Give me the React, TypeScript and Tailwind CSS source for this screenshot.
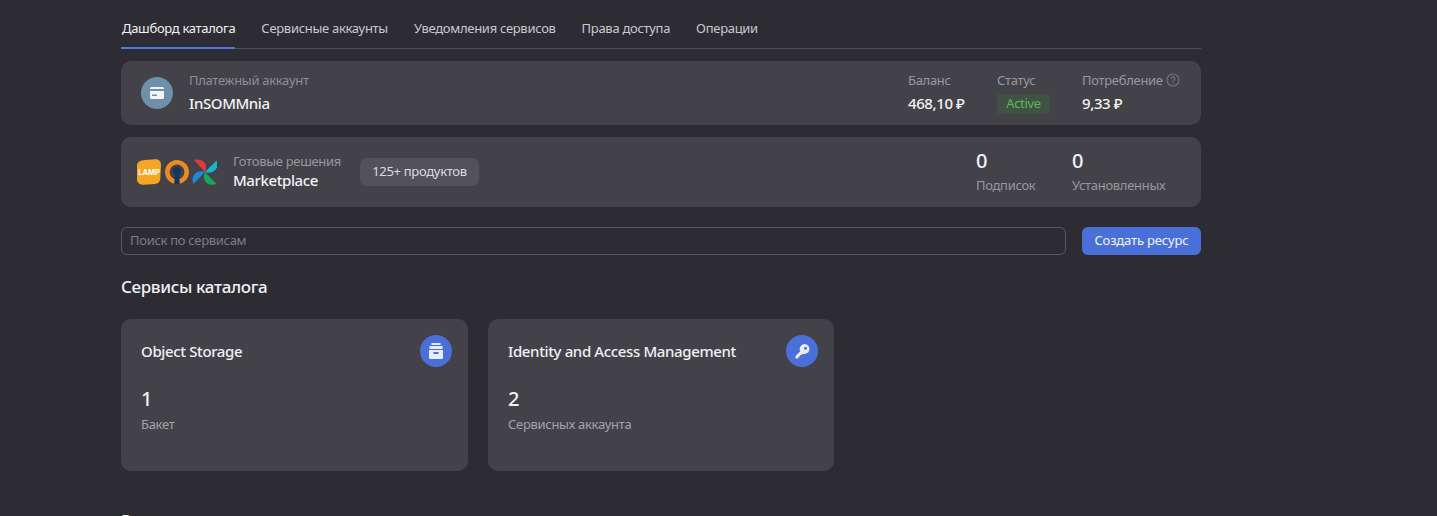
import React from 'react';

const TABS = ['Дашборд каталога', 'Сервисные аккаунты', 'Уведомления сервисов', 'Права доступа', 'Операции'];

const Stat = ({ value, label }: { value: string; label: string }) => (
  <div className="flex flex-col -mt-[2px]">
    <span className="text-[20px] leading-[24px] font-medium text-[#f2f2f4]">{value}</span>
    <span className="text-[13px] leading-[16px] mt-[4px] text-[#98989e]">{label}</span>
  </div>
);

const ServiceCard = ({ title, count, label, icon, width }: { title: string; count: string; label: string; icon: React.ReactNode; width: string }) => (
  <div className={`h-[152px] rounded-[10px] bg-[#434248] pl-[20px] pr-[16px] pt-[16px] ${width}`}>
    <div className="flex items-center justify-between h-[32px]">
      <span className="text-[15px] font-medium tracking-[-0.37px] text-[#f0f0f2]">{title}</span>
      <span className="w-[32px] h-[32px] rounded-full bg-[#4b6fd8] flex items-center justify-center">{icon}</span>
    </div>
    <div className="mt-[20px] text-[20px] leading-[24px] font-medium text-[#f2f2f4]">{count}</div>
    <div className="mt-[5px] text-[13px] leading-[16px] text-[#a3a3a9]">{label}</div>
  </div>
);

const App: React.FC = () => {
  return (
    <div className="h-[516px] overflow-hidden bg-[#2d2c33] pl-[121px] font-['Noto_Sans',sans-serif] tracking-[-0.3px]">
      <div className="w-[1080px]">
        <div className="flex h-[49px] gap-[26px] border-b border-[#4f4e54]">
          {TABS.map((tab, i) => (
            <div key={tab} className={`relative pt-[19px] text-[13px] leading-[18px] ${i === 0 ? 'pl-[1px] text-[#f2f2f4]' : 'text-[#c9c9cd]'}`}>
              {tab}
              {i === 0 && <div className="absolute left-0 right-0 -bottom-[1px] h-[2px] bg-[#4b78e6]" />}
            </div>
          ))}
        </div>

        <div className="mt-[12px] h-[64px] rounded-[10px] bg-[#434248] flex items-center pl-[20px] pr-[21px]">
          <span className="w-[32px] h-[32px] rounded-full bg-[#6f90ab] flex items-center justify-center">
            <svg width="14" height="12" viewBox="0 0 14 12">
              <path fill="#f2f4f6" d="M1.5 0h11A1.5 1.5 0 0 1 14 1.5V2H0v-.5A1.5 1.5 0 0 1 1.5 0ZM0 4h14v6.500A1.500 1.500 0 0 1 12.500 12h-11A1.500 1.500 0 0 1 0 10.500Z" />
              <rect x="2" y="7.500" width="5" height="1.500" fill="#6f90ab" />
            </svg>
          </span>
          <div className="ml-[16px] flex flex-col -mt-[3px]">
            <span className="text-[13px] leading-[16px] text-[#8e8e94]">Платежный аккаунт</span>
            <span className="mt-[6px] text-[15px] leading-[18px] font-medium tracking-[-0.4px] text-[#f2f2f4]">InSOMMnia</span>
          </div>
          <div className="ml-auto flex">
            <div className="flex flex-col w-[89px]">
              <span className="text-[13px] leading-[16px] text-[#98989e]">Баланс</span>
              <span className="mt-[5px] text-[15px] leading-[20px] font-medium tracking-[-0.4px] text-[#f2f2f4]">468,10 ₽</span>
            </div>
            <div className="flex flex-col w-[85px]">
              <span className="text-[13px] leading-[16px] text-[#98989e]">Статус</span>
              <span className="mt-[6px] w-[53px] h-[20px] rounded-[3px] bg-[#3f5245] flex items-center justify-center text-[13px] text-[#5cb85c]">Active</span>
            </div>
            <div className="flex flex-col w-[98px]">
              <span className="flex items-center gap-[3px] text-[13px] leading-[16px] text-[#98989e] whitespace-nowrap">
                Потребление
                <svg width="14" height="14" viewBox="0 0 14 14" fill="none" stroke="#707076" strokeWidth="1.200" className="shrink-0">
                  <circle cx="7" cy="7" r="6" />
                  <path d="M5.200 5.500a1.800 1.800 0 1 1 2.700 1.600c-.6.300-.9.700-.9 1.300" />
                  <path d="M7 9.800v1" />
                </svg>
              </span>
              <span className="mt-[5px] text-[15px] leading-[20px] font-medium tracking-[-0.4px] text-[#f2f2f4]">9,33 ₽</span>
            </div>
          </div>
        </div>

        <div className="mt-[12px] h-[70px] rounded-[10px] bg-[#434248] flex items-center pl-[16px]">
          <svg width="80" height="26" viewBox="0 0 80 26" className="shrink-0">
            <path fill="#f5a623" d="M8 1 18 .3c4-.3 6 2 6 5.700l-.7 13.500c-.2 3.500-2 5-5.300 5.500L7 25.700C3 26 0 24 0 20.500V6.500C0 3 3.500 1.400 8 1Z" />
            <text x="12" y="15.500" textAnchor="middle" fontSize="7.500" fontWeight="700" letterSpacing="0" fill="#fff" fontFamily="Inter, sans-serif">LAMP</text>
            <circle cx="40" cy="13" r="9.700" fill="none" stroke="#ed8a22" strokeWidth="4.500" />
            <circle cx="40" cy="12" r="4.200" fill="#12365f" />
            <path fill="#12365f" d="M38.200 14h3.600l1 11h-5.600Z" />
            <path fill="#e43a3a" d="M68 13 57 1C64-1 72 4 68 13Z" />
            <path fill="#19b5d0" d="M68 13 79.500 1.500C83 8 77 16 68 13Z" />
            <path fill="#1aa65c" d="M68 13 79.500 25C72 28 64 22 68 13Z" />
            <path fill="#1e88d8" d="M68 13 56.500 25C53 18 59 10 68 13Z" />
          </svg>
          <div className="ml-[16px] flex flex-col -mt-[2px]">
            <span className="text-[13px] leading-[16px] text-[#98989e]">Готовые решения</span>
            <span className="mt-[2px] text-[15px] leading-[18px] font-medium tracking-[-0.4px] text-[#f2f2f4]">Marketplace</span>
          </div>
          <span className="ml-[19px] h-[28px] w-[119px] rounded-[7px] bg-[#535259] flex items-center justify-center text-[13px] text-[#dcdce0]">125+ продуктов</span>
          <div className="ml-auto flex">
            <div className="w-[96px]"><Stat value="0" label="Подписок" /></div>
            <div className="w-[129px]"><Stat value="0" label="Установленных" /></div>
          </div>
        </div>

        <div className="mt-[20px] flex items-center justify-between">
          <div className="w-[945px] h-[28px] rounded-[6px] border border-[#5a595f] pl-[8px] flex items-center text-[13px] text-[#7d7d83]">Поиск по сервисам</div>
          <button className="w-[119px] h-[28px] rounded-[6px] bg-[#4b6fd8] text-[13px] tracking-[-0.15px] text-[#f2f4fa]">Создать ресурс</button>
        </div>

        <h2 className="mt-[21px] text-[17px] leading-[22px] font-medium tracking-[-0.35px] text-[#f0f0f2]">Сервисы каталога</h2>

        <div className="mt-[21px] flex gap-[20px]">
          <ServiceCard
            width="w-[347px]"
            title="Object Storage"
            count="1"
            label="Бакет"
            icon={
              <svg width="16" height="16" viewBox="0 0 16 16">
                <path fill="#e8ecf8" d="M3.500 0h9v2h-9ZM1.500 3h13v3h-13ZM1 7h14v7.500a1.500 1.500 0 0 1-1.500 1.500h-11A1.500 1.500 0 0 1 1 14.500Z" />
                <rect x="5.500" y="9" width="5" height="2" fill="#4b6fd8" />
              </svg>
            }
          />
          <ServiceCard
            width="w-[346px]"
            title="Identity and Access Management"
            count="2"
            label="Сервисных аккаунта"
            icon={
              <svg width="15" height="15" viewBox="0 0 15 15">
                <path fill="#e8ecf8" fillRule="evenodd" d="M9.500 0a5 5 0 1 1-1.800 9.700L6.500 11H5v1.500H3.500V14l-.5.500H.8L.5 14v-2L5.300 7.300A5 5 0 0 1 9.500 0Zm1 2.800a1.500 1.500 0 1 0 0 3 1.500 1.500 0 0 0 0-3Z" />
              </svg>
            }
          />
        </div>

        <h2 className="mt-[39px] text-[17px] leading-[22px] font-medium tracking-[-0.35px] text-[#f0f0f2]">Ресурсы</h2>
      </div>
    </div>
  );
};

export default App;
